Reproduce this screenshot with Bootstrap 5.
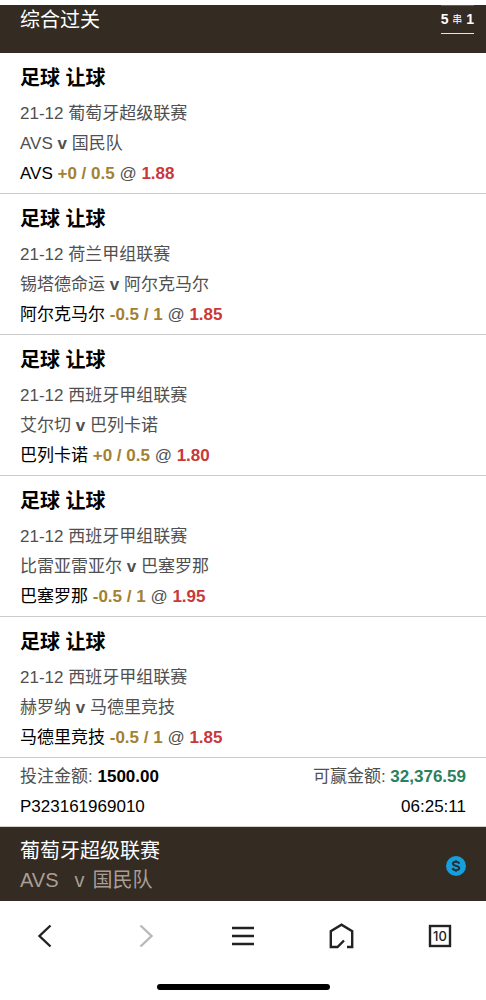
<!DOCTYPE html>
<html lang="zh-CN">
<head>
<meta charset="utf-8">
<meta name="viewport" content="width=device-width, initial-scale=1">
<title>综合过关</title>
<link href="https://cdn.jsdelivr.net/npm/bootstrap@5.3.0/dist/css/bootstrap.min.css" rel="stylesheet">
<style>
  body { font-family: "Liberation Sans", "Noto Sans CJK SC", sans-serif; font-size: 17px; line-height: 30px; color: #000; background: #fff; padding-top: 5px; }
  .bar-dark { background: #342b22; color: #fff; font-size: 20px; line-height: 29px; }
  .slip-head { height: 48px; }
  .slip-head h1 { font-size: 20px; line-height: 31px; }
  .parlay { font-size: 14px; line-height: 27px; height: 29px; margin-right: -8px; border-top: 1px solid #655d55; border-bottom: 1px solid #ebe5d2; }
  .parlay small { font-size: 10px; font-weight: 400; vertical-align: 1px; }
  .bet { padding: 10px 20px 4px; border-bottom: 1px solid #ccc; }
  .bet h2 { font-size: 20px; line-height: 30px; margin-bottom: 6px; }
  .totals { padding: 4px 20px; border-bottom: 1px solid #d2d2ca; }
  .soft { color: #505050; }
  .line-val { color: #a38132; }
  .odds { color: #c93838; }
  .win { color: #2b8060; }
  .next-match { padding: 10px 20px 6px; }
  .teams { color: #a99e95; }
  .tools { padding: 19px 32px 0; height: 83px; }
  .tools button { width: 26px; height: 32px; color: #222; }
  .tools button:disabled { color: #b9b9b9; opacity: 1; }
  .home-bar { width: 173px; height: 6px; background: #000; }
</style>
</head>
<body>
<header class="bar-dark slip-head px-3">
  <div class="d-flex justify-content-between align-items-start px-1">
    <h1 class="fw-normal mb-0">综合过关</h1>
    <div class="parlay fw-bold text-nowrap">5 <small>串</small> 1</div>
  </div>
</header>
<main>
  <section class="bet">
    <h2 class="fw-bold">足球 让球</h2>
    <div class="soft">21-12 葡萄牙超级联赛</div>
    <div class="soft">AVS <b>v</b> 国民队</div>
    <div>AVS <b class="line-val">+0 / 0.5</b> <span class="soft">@</span> <b class="odds">1.88</b></div>
  </section>
  <section class="bet">
    <h2 class="fw-bold">足球 让球</h2>
    <div class="soft">21-12 荷兰甲组联赛</div>
    <div class="soft">锡塔德命运 <b>v</b> 阿尔克马尔</div>
    <div>阿尔克马尔 <b class="line-val">-0.5 / 1</b> <span class="soft">@</span> <b class="odds">1.85</b></div>
  </section>
  <section class="bet">
    <h2 class="fw-bold">足球 让球</h2>
    <div class="soft">21-12 西班牙甲组联赛</div>
    <div class="soft">艾尔切 <b>v</b> 巴列卡诺</div>
    <div>巴列卡诺 <b class="line-val">+0 / 0.5</b> <span class="soft">@</span> <b class="odds">1.80</b></div>
  </section>
  <section class="bet">
    <h2 class="fw-bold">足球 让球</h2>
    <div class="soft">21-12 西班牙甲组联赛</div>
    <div class="soft">比雷亚雷亚尔 <b>v</b> 巴塞罗那</div>
    <div>巴塞罗那 <b class="line-val">-0.5 / 1</b> <span class="soft">@</span> <b class="odds">1.95</b></div>
  </section>
  <section class="bet">
    <h2 class="fw-bold">足球 让球</h2>
    <div class="soft">21-12 西班牙甲组联赛</div>
    <div class="soft">赫罗纳 <b>v</b> 马德里竞技</div>
    <div>马德里竞技 <b class="line-val">-0.5 / 1</b> <span class="soft">@</span> <b class="odds">1.85</b></div>
  </section>
  <section class="totals">
    <div class="d-flex justify-content-between">
      <div><span class="soft">投注金额:</span> <b>1500.00</b></div>
      <div><span class="soft">可赢金额:</span> <b class="win">32,376.59</b></div>
    </div>
    <div class="d-flex justify-content-between"><span>P323161969010</span><time>06:25:11</time></div>
  </section>
  <section class="bar-dark next-match d-flex justify-content-between align-items-center">
    <div>
      <div>葡萄牙超级联赛</div>
      <div class="teams d-flex"><span class="me-3">AVS</span><span class="me-2">v</span><span>国民队</span></div>
    </div>
    <svg width="20" height="20" viewBox="0 0 20 20" role="img" aria-label="兑现">
      <circle cx="10" cy="10" r="10" fill="#159fdc"/>
      <path d="M13.200 7.700C12.800 6.300 11.700 5.800 10 5.800S6.900 6.500 6.900 7.800C6.900 10.500 13.300 9.200 13.300 12.100 13.300 13.500 11.900 14.200 10 14.200S6.900 13.500 6.700 12M10 4.200V6M10 14V15.800" fill="none" stroke="#252e31" stroke-width="1.900"/>
    </svg>
  </section>
</main>
<nav class="tools d-flex justify-content-between align-items-start" aria-label="浏览器工具栏">
  <button type="button" class="btn p-0 border-0 d-flex align-items-center justify-content-center" aria-label="后退">
    <svg width="26" height="26" viewBox="0 0 26 26" fill="none" stroke="currentColor" stroke-width="2.400"><path d="M18.500 2.500 7.500 13l11 10.500"/></svg>
  </button>
  <button type="button" class="btn p-0 border-0 d-flex align-items-center justify-content-center" aria-label="前进" disabled>
    <svg width="26" height="26" viewBox="0 0 26 26" fill="none" stroke="currentColor" stroke-width="2.400"><path d="M9.500 2.500 20.500 13l-11 10.500"/></svg>
  </button>
  <button type="button" class="btn p-0 border-0 d-flex align-items-center justify-content-center" aria-label="菜单">
    <svg width="26" height="26" viewBox="0 0 26 26" fill="none" stroke="currentColor" stroke-width="2.400"><path d="M2 5h22M2 13h22M2 21h22"/></svg>
  </button>
  <button type="button" class="btn p-0 border-0 d-flex align-items-center justify-content-center" aria-label="主页">
    <svg width="26" height="26" viewBox="0 0 26 26" fill="none" stroke="currentColor" stroke-width="2.400"><path d="M15 17.500 8.500 24H1.800V8.200L12.500 1.700 23.200 8.200V24H18"/></svg>
  </button>
  <button type="button" class="btn p-0 border-0 d-flex align-items-center justify-content-center" aria-label="标签页 10">
    <svg width="26" height="26" viewBox="0 0 26 26"><rect x="2" y="3" width="20" height="20" fill="none" stroke="currentColor" stroke-width="2.400"/><text x="12" y="17.500" text-anchor="middle" font-family="Inter, sans-serif" font-size="13" font-weight="500" fill="currentColor">10</text></svg>
  </button>
</nav>
<div class="home-bar rounded-pill mx-auto"></div>
<script src="https://cdn.jsdelivr.net/npm/bootstrap@5.3.0/dist/js/bootstrap.bundle.min.js"></script>
</body>
</html>
